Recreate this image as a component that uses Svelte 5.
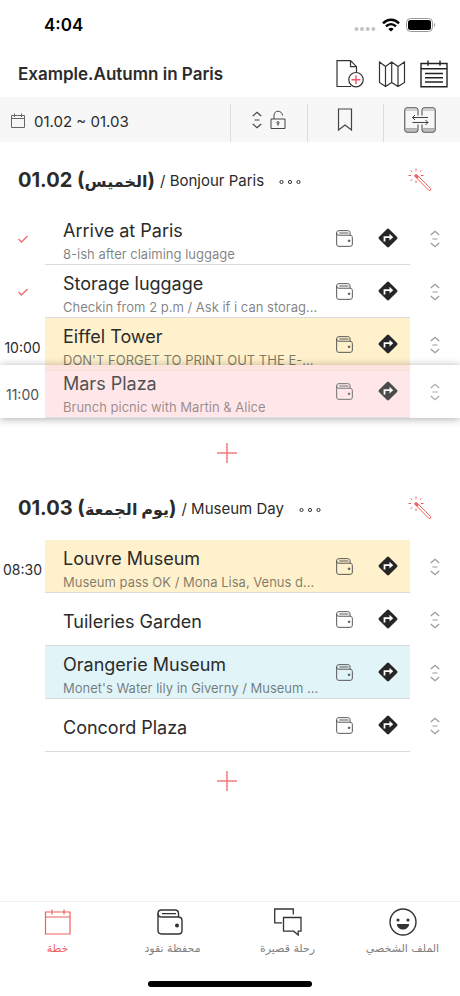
<script lang="ts">
	interface Place {
		id: number;
		title: string;
		memo?: string;
		time?: string;
		done?: boolean;
		color?: 'yellow' | 'pink' | 'blue';
		dragging?: boolean;
	}

	interface Day {
		date: string;
		weekday: string;
		name: string;
		places: Place[];
	}

	const days: Day[] = [
		{
			date: '01.02',
			weekday: 'الخميس',
			name: 'Bonjour Paris',
			places: [
				{ id: 1, title: 'Arrive at Paris', memo: '8-ish after claiming luggage', done: true },
				{ id: 2, title: 'Storage luggage', memo: 'Checkin from 2 p.m / Ask if i can storag...', done: true },
				{ id: 3, title: 'Eiffel Tower', memo: "DON'T FORGET TO PRINT OUT THE E-...", time: '10:00', color: 'yellow' },
				{ id: 4, title: 'Mars Plaza', memo: 'Brunch picnic with Martin & Alice', time: '11:00', color: 'pink', dragging: true }
			]
		},
		{
			date: '01.03',
			weekday: 'يوم الجمعة',
			name: 'Museum Day',
			places: [
				{ id: 5, title: 'Louvre Museum', memo: 'Museum pass OK / Mona Lisa, Venus d...', time: '08:30', color: 'yellow' },
				{ id: 6, title: 'Tuileries Garden' },
				{ id: 7, title: 'Orangerie Museum', memo: "Monet's Water lily in Giverny / Museum ...", color: 'blue' },
				{ id: 8, title: 'Concord Plaza' }
			]
		}
	];

	const tabs = [
		{ id: 'plan', label: 'خطة' },
		{ id: 'wallet', label: 'محفظة نقود' },
		{ id: 'trips', label: 'رحلة قصيرة' },
		{ id: 'profile', label: 'الملف الشخصي' }
	];

	let activeTab = $state('plan');
</script>

{#snippet wallet(size: number, stroke: number)}
	<svg width={size} height={size} viewBox="0 0 26 26" fill="none" stroke="currentColor" stroke-width={stroke}>
		<path d="M4.5 8h16.800c2.500 0 3.700 1.400 3.700 3.500v10c0 2.300-1.200 3.500-3.500 3.500h-17C2.200 25 1 23.800 1 21.500V4.500C1 2.300 2.300 1 4.500 1H18c2.300 0 3.500 1.200 3.500 3.300V8" />
		<path d="M1 4.500C1 7 2.300 8 4.500 8M5 4.600h14" />
		<circle cx="20" cy="16.500" r="1.300" fill="currentColor" />
	</svg>
{/snippet}

{#snippet grip()}
	<svg width="12" height="18" viewBox="0 0 12 18" fill="none" stroke="currentColor" stroke-width="1.200">
		<path d="M1.800 5L6 1.300 10.200 5M3.500 9h5M1.800 13L6 16.700l4.200-3.700" />
	</svg>
{/snippet}

<div class="app">
	<div class="status">
		<span class="clock">4:04</span>
		<div class="signals">
			<svg width="22" height="14" viewBox="0 0 22 14" fill="#c4c4c4">
				<circle cx="2.500" cy="11" r="2" /><circle cx="8" cy="11" r="2" />
				<circle cx="13.700" cy="11" r="2" /><circle cx="19.300" cy="11" r="2" />
			</svg>
			<svg width="18" height="14" viewBox="0 0 18 14" fill="none" stroke="#000" stroke-width="2.400">
				<path d="M1 5.300C5.600.500 12.400.500 17 5.300M4 8.400c3-3 7-3 10 0" />
				<path d="M9 13.500L6.300 10.900c1.500-1.400 3.900-1.400 5.400 0z" fill="#000" stroke="none" />
			</svg>
			<svg width="30" height="14" viewBox="0 0 30 14">
				<rect x=".5" y=".5" width="26" height="13" rx="4" fill="none" stroke="#999" />
				<rect x="2" y="2" width="23" height="10" rx="2.500" />
				<path d="M28 5c1.500.500 1.500 3.500 0 4z" fill="#999" />
			</svg>
		</div>
	</div>

	<header class="titlebar">
		<h1>Example.Autumn in Paris</h1>
		<div class="actions">
			<button aria-label="Add document">
				<svg width="28" height="28" viewBox="0 0 28 28" fill="none" stroke="#333" stroke-width="1.200">
					<path d="M15 26.500H1V.700h13.500l6 6V13M14.500.700v6h6" />
					<circle cx="20" cy="19.700" r="7.200" fill="#fff" />
					<path d="M15.500 19.700h9M20 15.200v9" stroke="#ef5468" stroke-width="1.400" />
				</svg>
			</button>
			<button aria-label="Map">
				<svg width="28" height="28" viewBox="0 0 28 28" fill="none" stroke="#333" stroke-width="1.200">
					<path d="M1.500 2l6 4.500L13.700 2 20 6.500 26.500 2v20.500L20 26.500l-6.300-4-6.200 4-6-4zM7.500 6.500v20M13.700 2v20.500M20 6.500v20" />
				</svg>
			</button>
			<button aria-label="Calendar">
				<svg width="28" height="28" viewBox="0 0 28 28" fill="none" stroke="#222" stroke-width="1.400">
					<path d="M1 3.500h26v23.300H1zM1 8.700h26M8 .500v5.300M20 .500v5.300" />
					<path d="M5 13.500h18M5 17.800h18M5 22h18" />
				</svg>
			</button>
		</div>
	</header>

	<div class="toolbar">
		<button class="range">
			<svg width="16" height="16" viewBox="0 0 16 16" fill="none" stroke="#666">
				<path d="M1.500 2.500h13v12h-13zM1.500 5.500h13M4.500 .500v3.500M11.500 .500v3.500" />
			</svg>
			01.02 ~ 01.03
		</button>
		<button class="tool order" aria-label="Unlock order">
			{@render grip()}
			<svg width="16" height="20" viewBox="0 0 16 20" fill="none" stroke="currentColor">
				<path d="M1 9h14v9.500H1zM4 9V5.500C4 -.200 12 -.200 12.500 5.500" />
				<circle cx="8" cy="12.700" r="1.100" />
				<path d="M8 13.800v2" />
			</svg>
		</button>
		<button class="tool" aria-label="Bookmarks">
			<svg width="16" height="24" viewBox="0 0 16 24" fill="none" stroke="currentColor" stroke-width="1.200">
				<path d="M1.500 1h13v21L8 17l-6.500 5z" />
			</svg>
		</button>
		<button class="tool devices" aria-label="Move between devices">
			<svg width="32" height="26" viewBox="0 0 32 26" fill="none" stroke="currentColor">
				<path d="M1.500 21.500h12v3h-11l-1-1zM18.500 21.500h12v2l-1 1h-11z" fill="#bbb" stroke="none" />
				<path d="M14 8.500V3Q14 .800 12 .800H3Q.800.800.800 3v20q0 2.200 2.200 2.200h9q2 0 2-2.200v-5.500M18 8.500V3Q18 .800 20 .800h9Q31.200.800 31.200 3v20q0 2.200-2.200 2.200h-9q-2 0-2-2.200v-5.500" />
				<path d="M1 3h13M18 3h13M1 21.500h13M18 21.500h13" stroke="#aaa" />
				<path d="M24 10.500H8.500M11 8l-2.500 2.500L11 13M8.500 15.500H24M21.500 13l2.500 2.500-2.500 2.500" />
			</svg>
		</button>
	</div>

	<main>
		{#each days as day (day.date)}
			<section>
				<div class="day-head">
					<h2>{day.date} (<bdi>{day.weekday}</bdi>)</h2>
					<span class="day-name">/ {day.name}</span>
					<button class="more" aria-label="More">
						<svg width="22" height="6" viewBox="0 0 22 6" fill="none" stroke="#333">
							<circle cx="2.500" cy="3" r="1.600" /><circle cx="11" cy="3" r="1.600" /><circle cx="19.500" cy="3" r="1.600" />
						</svg>
					</button>
					<button class="magic" aria-label="Optimize route">
						<svg width="24" height="24" viewBox="0 0 24 24" fill="none" stroke="#f0625f">
							<path d="M8.300 6.200l14.500 14.500q.400 2-1.700 1.900L6.800 8.200z" />
							<path d="M7 6.800l3 3" stroke-width="2.600" />
							<path d="M8 .500v2.500M8 12.500v2.500M.500 7.500h2.500M13 7.500h2.500M2.500 2.500l1.800 1.600M13.500 2.300l-1.800 1.800M2.500 13l1.800-1.800" />
						</svg>
					</button>
				</div>

				<ul class="places">
					{#each day.places as place (place.id)}
						<li class="place" class:dragging={place.dragging}>
							<div class="when">
								{#if place.done}
									<svg width="12" height="10" viewBox="0 0 12 10" fill="none" stroke="#ef6a72" stroke-width="1.400">
										<path d="M1.500 5l3 3L10.500 2" />
									</svg>
								{:else if place.time}
									<time>{place.time}</time>
								{/if}
							</div>
							<div class="card {place.color ?? ''}">
								<div class="text">
									<h3>{place.title}</h3>
									{#if place.memo}
										<p>{place.memo}</p>
									{/if}
								</div>
								<button class="cost" aria-label="Expenses for {place.title}">
									{@render wallet(17, 1.5)}
								</button>
								<button class="route" aria-label="Directions to {place.title}">
									<svg width="20" height="20" viewBox="0 0 20 20">
										<path d="M9 .900q1-.800 2 0L19.100 9q.800 1 0 2L11 19.100q-1 .800-2 0L.900 11q-.800-1 0-2z" fill="#262626" />
										<path d="M6.500 13.500V9.200h6" fill="none" stroke="#fff" stroke-width="1.800" />
										<path d="M11.500 5.800L15.200 9.200l-3.700 3.400z" fill="#fff" />
									</svg>
								</button>
							</div>
							<button class="handle" aria-label="Reorder {place.title}">
								{@render grip()}
							</button>
						</li>
					{/each}
				</ul>

				<button class="add" aria-label="Add place">
					<svg width="22" height="22" viewBox="0 0 22 22" fill="none" stroke="#f27a7d" stroke-width="1.500">
						<path d="M1 11h20M11 1v20" />
					</svg>
				</button>
			</section>
		{/each}
	</main>

	<footer>
		<nav class="tabs">
			{#each tabs as tab (tab.id)}
				<button class:active={activeTab === tab.id} onclick={() => (activeTab = tab.id)}>
					{#if tab.id === 'plan'}
						<svg width="28" height="28" viewBox="0 0 28 28" fill="none" stroke="currentColor" stroke-width="1.200">
							<path d="M1.500 4h24.500v22H1.500zM1.500 9H26M8 1.500v5M20 1.500v5" />
						</svg>
					{:else if tab.id === 'wallet'}
						<span class="icon">{@render wallet(26, 1.4)}</span>
					{:else if tab.id === 'trips'}
						<svg width="28" height="28" viewBox="0 0 28 28" fill="none" stroke="currentColor" stroke-width="1.300">
							<path d="M8 14.800H.700V1h18.600v5.500" />
							<path d="M9.500 9.500H27v13.700h-2.800V27l-4.500-3.800H9.500z" />
						</svg>
					{:else}
						<svg width="28" height="28" viewBox="0 0 28 28" fill="none" stroke="currentColor" stroke-width="1.400">
							<circle cx="14" cy="14" r="13" />
							<circle cx="9" cy="12" r="1.600" fill="currentColor" stroke="none" />
							<circle cx="19" cy="12" r="1.600" fill="currentColor" stroke="none" />
							<path d="M7.800 16h12.400c-.700 7.300-11.700 7.300-12.400 0z" fill="currentColor" stroke="none" />
						</svg>
					{/if}
					<span class="label" dir="rtl">{tab.label}</span>
				</button>
			{/each}
		</nav>
		<div class="home"></div>
	</footer>
</div>

<style>
	:global(body) {
		background: #fff;
	}

	.app {
		display: flex;
		flex-direction: column;
		min-height: 100vh;
		color: #2b2b2b;
		font-family: Inter, 'DejaVu Sans', sans-serif;
	}

	button {
		display: flex;
		align-items: center;
		justify-content: center;
		padding: 0;
		border: 0;
		background: none;
		color: inherit;
		font: inherit;
		cursor: pointer;
	}

	svg {
		display: block;
		flex: none;
	}

	h1,
	h2,
	h3,
	p,
	ul {
		margin: 0;
		padding: 0;
	}

	.status {
		display: flex;
		align-items: center;
		justify-content: space-between;
		height: 50px;
		padding: 0 24px 0 44px;
	}

	.clock {
		color: #000;
		font-size: 17px;
		font-weight: 600;
	}

	.signals {
		display: flex;
		gap: 6px;
	}

	.titlebar {
		display: flex;
		align-items: center;
		justify-content: space-between;
		height: 47px;
		padding: 0 12px 0 18px;
	}

	h1 {
		font-size: 17px;
		font-weight: 600;
	}

	.actions {
		display: flex;
		gap: 14px;
	}

	.toolbar {
		display: grid;
		grid-template-columns: 3fr 1fr 1fr 1fr;
		height: 45px;
		background: #f7f7f7;
	}

	.range {
		justify-content: flex-start;
		gap: 8px;
		padding: 3px 0 0 10px;
		font-size: 15px;
	}

	.tool {
		margin-top: 7px;
		padding-bottom: 7px;
		border-left: 1px solid #ddd;
		color: #444;
	}

	.order {
		gap: 7px;
	}

	.devices {
		padding-right: 4px;
	}

	main {
		flex: 1;
		padding-top: 12px;
	}

	.day-head {
		display: flex;
		align-items: center;
		height: 58px;
		padding: 0 28px 6px 18px;
		box-sizing: border-box;
	}

	h2 {
		font-size: 20px;
		font-weight: 700;
		line-height: 24px;
	}

	bdi {
		font-size: 16px;
	}

	.day-name {
		margin-left: 5px;
		font-size: 15px;
	}

	.more {
		margin-left: 15px;
		padding-top: 3px;
	}

	.magic {
		margin-left: auto;
	}

	.places {
		list-style: none;
	}

	.place {
		display: grid;
		grid-template-columns: 45px 1fr 50px;
		height: 53px;
	}

	.place.dragging {
		position: relative;
		top: -6px;
		background: #fff;
		box-shadow: 0 1px 8px rgba(0, 0, 0, 0.4);
		opacity: 0.82;
	}

	.when {
		display: flex;
		align-items: center;
		justify-content: center;
	}

	time {
		padding-top: 6px;
		font-size: 14px;
	}

	.card {
		display: flex;
		align-items: center;
		min-width: 0;
		padding: 0 12px 0 18px;
		border-bottom: 1px solid #d8dcdc;
	}

	.yellow {
		background: #fff1cc;
	}

	.pink {
		background: #ffe1e4;
	}

	.blue {
		background: #e1f4f8;
	}

	.text {
		display: flex;
		flex: 1;
		flex-direction: column;
		gap: 4px;
		min-width: 0;
		padding-top: 6px;
	}

	h3 {
		font-size: 18px;
		font-weight: 400;
		line-height: 22px;
	}

	.text p {
		color: rgba(0, 0, 0, 0.5);
		font-size: 13px;
		line-height: 16px;
		white-space: nowrap;
	}

	.cost {
		color: #555;
	}

	.route {
		margin-left: 25px;
	}

	.handle {
		color: #999;
	}

	.add {
		width: 100%;
		height: 58px;
		padding-right: 6px;
	}

	footer {
		border-top: 1px solid #f2f2f2;
	}

	.tabs {
		display: grid;
		grid-template-columns: repeat(4, 1fr);
		padding-top: 6px;
	}

	.tabs button {
		flex-direction: column;
		gap: 5px;
		color: #333;
	}

	.icon {
		padding: 1px 6px 1px 0;
	}

	.label {
		color: #808080;
		font-family: 'DejaVu Sans', sans-serif;
		font-size: 11px;
		line-height: 16px;
	}

	.tabs .active,
	.active .label {
		color: #f0605f;
	}

	.home {
		width: 164px;
		height: 6px;
		margin: 24px auto 9px;
		border-radius: 3px;
		background: #000;
	}
</style>
